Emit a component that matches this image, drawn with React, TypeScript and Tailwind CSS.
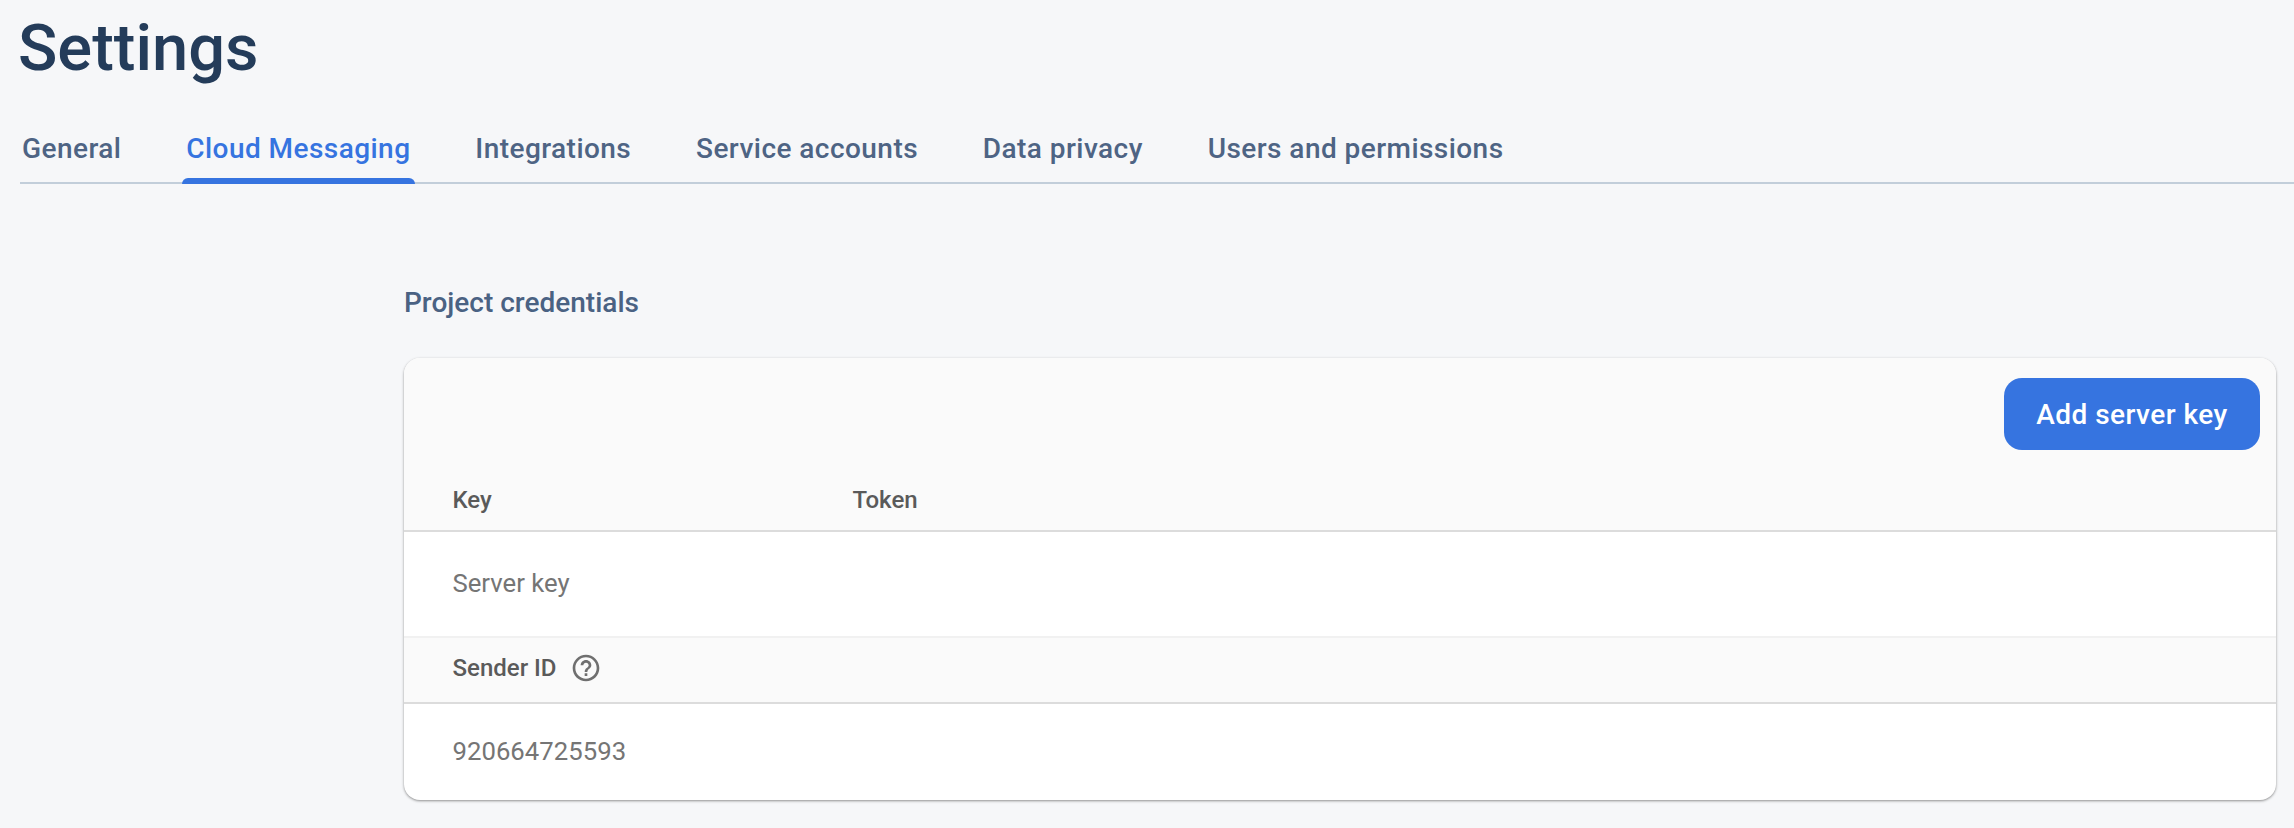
const tabs = ["General", "Cloud Messaging", "Integrations", "Service accounts", "Data privacy", "Users and permissions"];

function HelpIcon() {
  return (
    <svg viewBox="0 0 24 24" className="ml-[13px] h-[32px] w-[32px] fill-[#6f6f6f]">
      <path d="M11 18h2v-2h-2v2zm1-16C6.48 2 2 6.48 2 12s4.48 10 10 10 10-4.48 10-10S17.52 2 12 2zm0 18c-4.41 0-8-3.59-8-8s3.59-8 8-8 8 3.59 8 8-3.59 8-8 8zm0-14c-2.21 0-4 1.79-4 4h2c0-1.1.9-2 2-2s2 .9 2 2c0 2-3 1.75-3 5h2c0-2.25 3-2.5 3-5 0-2.21-1.79-4-4-4z" />
    </svg>
  );
}

export default function App() {
  return (
    <div className="h-[828px] overflow-hidden bg-[#f6f7f9] font-['Roboto',sans-serif]">
      {/* Header */}
      <h1 className="h-[124px] pl-[18px] pt-[6px] text-[65px] leading-[84px] font-medium text-[#243c5a]">Settings</h1>

      {/* Tabs */}
      <nav className="ml-[20px] flex h-[60px] gap-[64.8px] border-b-2 border-[#c2ceda] pl-[2px]">
        {tabs.map((t) => {
          const active = t === "Cloud Messaging";
          return (
            <div
              key={t}
              className={`relative text-[28px] leading-[50px] font-medium tracking-[0.45px] ${active ? "text-[#3674e0]" : "text-[#4e6484]"}`}
            >
              {t}
              {active && <span className="absolute -left-[4px] -right-[5px] -bottom-[2px] h-[6px] rounded-t-[6px] bg-[#3674e0]" />}
            </div>
          );
        })}
      </nav>

      <section className="ml-[404px] mr-[18px]">
        <h2 className="mt-[100px] h-[74px] pt-[1px] text-[28px] leading-[36px] font-medium text-[#4a6283]">Project credentials</h2>

        <div className="overflow-hidden rounded-[16px] bg-white shadow-[0_1px_3px_rgba(0,0,0,0.3),0_1px_2px_rgba(0,0,0,0.15)]">
          {/* Button row + column heads */}
          <div className="h-[174px] border-b-2 border-[#dcdcdc] bg-[#fafafa]">
            <div className="flex justify-end pr-[16px] pt-[20px]">
              <button type="button" className="h-[72px] w-[256px] rounded-[18px] bg-[#3674e0] pt-[2px] text-[28px] font-medium tracking-[0.45px] text-white">
                Add server key
              </button>
            </div>
            <div className="mt-[34px] flex pl-[48.5px] text-[24px] leading-[32px] font-medium text-[#5a5a5a]">
              <span className="w-[400px]">Key</span>
              <span>Token</span>
            </div>
          </div>

          <div className="flex h-[104px] items-center pb-[2px] pl-[48.5px] text-[25.7px] text-[#757575]">Server key</div>

          <div className="flex h-[68px] items-center border-y-2 border-t-[#f1f1f1] border-b-[#dcdcdc] bg-[#fafafa] pb-[4px] pl-[48.5px] text-[24px] font-medium text-[#5a5a5a]">
            Sender ID
            <HelpIcon />
          </div>

          <div className="flex h-[96px] items-center pb-[2px] pl-[48.5px] text-[25.7px] tracking-[0.03px] text-[#757575]">920664725593</div>
        </div>
      </section>
    </div>
  );
}
